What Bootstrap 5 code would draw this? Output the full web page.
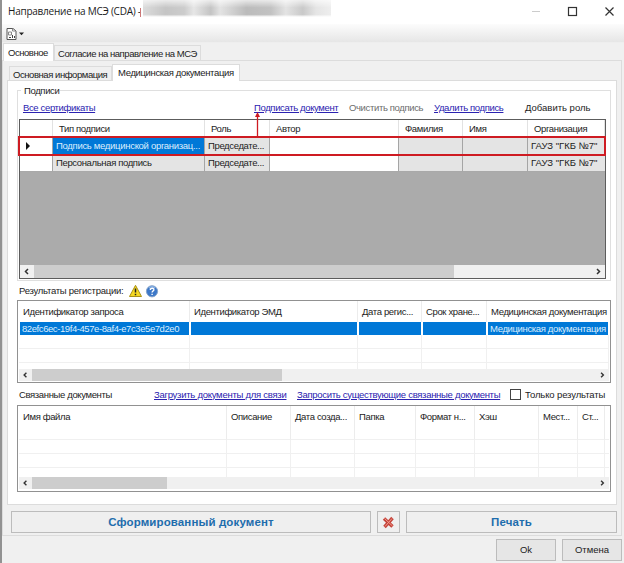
<!DOCTYPE html>
<html lang="ru">
<head>
<meta charset="utf-8">
<meta name="viewport" content="width=device-width, initial-scale=1">
<title>Направление на МСЭ (CDA)</title>
<link href="https://cdn.jsdelivr.net/npm/bootstrap@5.3.0/dist/css/bootstrap.min.css" rel="stylesheet">
<style>
body{font:9.5px/12px "Liberation Sans",sans-serif;letter-spacing:-.36px;color:#1c1c1c;background:#f0f0f0;overflow:hidden}
.win{width:624px;height:563px;border-left:2px solid #929292}
.titlebar{height:24px;background:#fff;padding-left:6px;font:10px/23px "Open Sans","Noto Sans",sans-serif;letter-spacing:-.24px}
.ttl{width:132px;white-space:nowrap}
.caret-red{width:1px;height:9px;background:#c77}
.redacted{width:188px;height:17px;margin-left:2px;background:linear-gradient(90deg,#dcdcdc,#c5c5c5 12%,#ccc 22%,#e6e6e6 27%,#c4c4c4 36%,#e3e3e3 41%,#bbb 55%,#c2c2c2 68%,#e3e3e3 76%,#c9c9c9 85%,#e5e5e5 92%,#eee);-webkit-mask-image:linear-gradient(#0005,#000 45%,#000 85%,#0000)}
.wctl{margin-left:auto}
.toolbar-strip{height:19px;background:linear-gradient(#fcfcfc,#e6e6e6);padding-left:3px;border-bottom:1px solid #eee}
.tabs-o{height:17px;padding-left:1px}
.tabs-i{height:16px;padding-left:2px}
.tb{border:1px solid #dcdcdc;border-bottom:0;background:#f0f0f0;white-space:nowrap}
.tb.on{background:#fff;position:relative;z-index:1;margin-bottom:-1px}
.tb-a{width:51px;height:18px;padding:3px 0 0 4px;letter-spacing:-.45px}
.tb-b{width:147px;height:15px;padding:2px 0 0 3px;letter-spacing:-.45px}
.tb-c{width:103px;height:14px;padding:2px 0 0 3px;letter-spacing:-.44px}
.tb-d{width:128px;height:17px;padding:2px 0 0 5px}
.pane-o{width:620px;height:476px;border:1px solid #dcdcdc;padding:3px 4px 0 4px;background:#f0f0f0}
.pane-i{width:610px;height:425px;border:1px solid #dcdcdc;background:#fff;padding:9px 0 0 9px}
.grp{width:594px;height:191px;border:1px solid #dfdfdf;padding:0 1px;margin:0}
.grp-t{margin:-6px 0 0 2px;padding:0 3px;background:#fff;width:39px}
.links{height:22px;padding-left:4px}
.lk{color:#2a22b0;text-decoration:underline;text-decoration-thickness:1px;text-underline-offset:1px;white-space:nowrap}
.k1{width:231px}.k2{width:95px}.k3{width:85px;color:#6d6d6d}.k4{width:91px}.k5{letter-spacing:0}
.grid1{width:587px;height:160px;border:1.5px solid #5c5c5c;background:#ababab;position:relative}
.r{display:grid}
.g1{grid-template-columns:33px 152px 65px 129px 64px 65px 1fr}
.g2{grid-template-columns:171px 168px 64px 65px 1fr}
.g3{grid-template-columns:208px 64px 64px 61px 59px 64px 39px 27px 1fr}
.r>span{white-space:nowrap;overflow:hidden}
.h1r{height:18px;background:#fff}
.h1r>span{padding:3px 0 0 6px;border-right:1px solid #e2e2e2}
.d1r{height:17px}
.d1r>span{background:#e4e4e4;border-right:1px solid #a5a5a5;border-bottom:1px solid #a9a9a9;padding:2px 0 0 3px}
.d1r>span:last-child{letter-spacing:0;border-right:0;padding-left:3px}
.d1r>.w{background:#fff}
.d1r>.sel,.selrow>span{background:#0078d7;color:#dceefd}
.d1r>.sel{letter-spacing:-.3px}
.frame-red{position:absolute;left:-2px;top:16px;width:588px;height:20px;border:2px solid #ce1b22}
.arrow-red{position:absolute;left:234px;top:-9px}
.sb{height:13px;background:#f0f0f0}
.sb1{position:absolute;left:0;right:0;bottom:0}
.sb svg{flex:none}
.th1{width:420px;height:13px;background:#cdcdcd}
.th2{width:250px;height:12px;background:#cdcdcd}
.th3{width:135px;height:12px;background:#cdcdcd}
.reg{height:18px;margin:1px 0 0 2px}.regt{width:110px;white-space:nowrap;letter-spacing:-.26px}
.list{width:594px;border:1px solid #919191;background:#fff;padding:0 1px}
.list2{height:83px}.list3{height:87px}.list .sb{height:12px}
.h2r{height:21px}.h2r>span{padding:5px 0 0 4px;border-right:1px solid #ececec}
.e>span{border-right:1px solid #f0f0f0;border-bottom:1px solid #f0f0f0}
.selrow{height:13px}.selrow>span{margin:0 1px;padding-left:2px;line-height:14px}
.selrow>.uid{letter-spacing:-.42px}
.e14{height:14px}.e5{height:6px}.e9{height:9px}.e5>span,.e9>span{border-bottom:0}
.h3r{height:34px}.h3r>span{padding:5px 0 0 4px;border-right:1px solid #ececec;border-bottom:1px solid #f0f0f0}
.rel{height:22px;margin-left:2px;padding-top:1px}.rel>*{flex:none;white-space:nowrap}
.q1{width:135px}.q2{width:143px;letter-spacing:-.26px}.q3{width:213px;letter-spacing:-.3px}.q4{margin-left:4px;letter-spacing:-.12px}
.cb{width:11px;height:11px;border:1px solid #444;background:#fff}
.wbtn{border:1.5px solid #bcbcbc;background:#efefef;height:22px;border-radius:0;padding:0;display:flex;align-items:center;justify-content:center;color:#222;font-size:9.5px;line-height:12px}
.big{color:#1e6dad;font-weight:700;font-size:11.5px;letter-spacing:.12px}
.acts{margin:6px 0 0 4px}.b1{width:360px}.b2{width:23px;margin:0 6px 0 6px}.b3{width:211px}
.foot{gap:6px;padding:3px 2px 0 0}.b4,.b5{width:60px}
.b5{background:#e6e6e6}.b4{background:#e6e6e6}
</style>
<script src="https://cdn.jsdelivr.net/npm/bootstrap@5.3.0/dist/js/bootstrap.bundle.min.js"></script>
</head>
<body>
<main class="win">
  <header class="titlebar d-flex">
    <span class="ttl">Направление на МСЭ (CDA) -</span><span class="caret-red mt-2"></span><span class="redacted"></span>
    <svg class="wctl" width="96" height="24" viewBox="0 0 96 24" fill="none" stroke="#333"><path d="M4 11.500h8" stroke="#ccc"/><rect x="40.500" y="7.500" width="8" height="8" stroke-width="1.200"/><path d="M77.500 7.500l8 8m0-8l-8 8" stroke-width="1.200"/></svg>
  </header>
  <div class="toolbar-strip d-flex">
    <svg width="22" height="18" viewBox="0 0 22 18"><path d="M2 4.500h6l3 2.500v8.500H2z" fill="#fff" stroke="#555"/><path d="M7.500 4.500V7h3M3.500 8h3v3h-3z" fill="none" stroke="#888"/><path d="M4 13.500h2M7.500 11v3M9.500 12v2" fill="none" stroke="#444"/><path d="M14 8.500h5l-2.500 2.700z" fill="#222"/></svg>
  </div>
  <div class="tabs-o d-flex align-items-end"><div class="tb tb-a on">Основное</div><div class="tb tb-b">Согласие на направление на МСЭ</div></div>
  <section class="pane-o">
    <div class="tabs-i d-flex align-items-end"><div class="tb tb-c">Основная информация</div><div class="tb tb-d on">Медицинская документация</div></div>
    <section class="pane-i">
      <section class="grp">
        <div class="grp-t">Подписи</div>
        <div class="links d-flex align-items-center">
          <a class="lk k1">Все сертификаты</a><a class="lk k2">Подписать документ</a><span class="k3 text-nowrap">Очистить подпись</span><a class="lk k4">Удалить подпись</a><span class="k5 text-nowrap">Добавить роль</span>
        </div>
        <div class="grid1">
          <div class="r g1 h1r"><span></span><span>Тип подписи</span><span>Роль</span><span>Автор</span><span>Фамилия</span><span>Имя</span><span>Организация</span></div>
          <div class="r g1 d1r"><span class="w"><svg class="d-block" width="12" height="11" viewBox="0 0 12 11"><path d="M3 2l4 4-4 4z" fill="#111"/></svg></span><span class="sel">Подпись медицинской организац...</span><span>Председате...</span><span class="w"></span><span></span><span></span><span>ГАУЗ "ГКБ №7"</span></div>
          <div class="r g1 d1r"><span class="w"></span><span>Персональная подпись</span><span>Председате...</span><span class="w"></span><span></span><span></span><span>ГАУЗ "ГКБ №7"</span></div>
          <div class="sb sb1 d-flex"><svg width="14" height="13" viewBox="0 0 14 13"><path d="M8 4L5.500 6.500 8 9" fill="none" stroke="#333" stroke-width="1.500"/></svg><span class="th1"></span><svg class="ms-auto" width="14" height="13" viewBox="0 0 14 13"><path d="M6 4l2.500 2.500L6 9" fill="none" stroke="#333" stroke-width="1.500"/></svg></div>
          <span class="frame-red"></span>
          <svg class="arrow-red" width="7" height="26" viewBox="0 0 7 26"><path d="M3.500 3v23" stroke="#ce1b22" stroke-width="1.300"/><path d="M3.500 1L6 6H1z" fill="#ce1b22"/></svg>
        </div>
      </section>
      <div class="reg d-flex align-items-center"><span class="regt">Результаты регистрации:</span>
        <svg width="32" height="16" viewBox="0 0 32 16"><path d="M6.500 2.300L12.500 13.500H.5z" fill="#f6d923" stroke="#a99119" stroke-linejoin="round"/><path d="M6.500 5.500v4M6.500 10.700v1.500" stroke="#222" stroke-width="1.500"/><circle cx="23" cy="8.300" r="5.600" fill="#3d78c8" stroke="#88a6cc"/><path d="M20 5.200a4 4 0 0 1 6 0" stroke="#a9caf2" fill="none"/><path d="M21.300 7c.1-2.600 4-2.100 3.500 0-.3 1.100-1.700 1.100-1.700 2.500M23.100 10.700v1.300" stroke="#fff" stroke-width="1.400" fill="none"/></svg>
      </div>
      <div class="list list2">
        <div class="r g2 h2r"><span>Идентификатор запроса</span><span>Идентификатор ЭМД</span><span>Дата регис...</span><span>Срок хране...</span><span class="border-end-0">Медицинская документация</span></div>
        <div class="r g2 selrow"><span class="uid">82efc6ec-19f4-457e-8af4-e7c3e5e7d2e0</span><span></span><span></span><span></span><span>Медицинская документация</span></div>
        <div class="r g2 e e14"><span></span><span></span><span></span><span></span><span></span></div>
        <div class="r g2 e e14"><span></span><span></span><span></span><span></span><span></span></div>
        <div class="r g2 e e5"><span></span><span></span><span></span><span></span><span></span></div>
        <div class="sb d-flex"><svg width="13" height="12" viewBox="0 0 14 13"><path d="M8 4L5.500 6.500 8 9" fill="none" stroke="#333" stroke-width="1.500"/></svg><span class="th2"></span><svg class="ms-auto" width="14" height="12" viewBox="0 0 14 13"><path d="M6 4l2.500 2.500L6 9" fill="none" stroke="#333" stroke-width="1.500"/></svg></div>
      </div>
      <div class="rel d-flex align-items-center"><span class="q1">Связанные документы</span><a class="lk q2">Загрузить документы для связи</a><a class="lk q3">Запросить существующие связанные документы</a><span class="cb"></span><span class="q4">Только результаты</span></div>
      <div class="list list3">
        <div class="r g3 h3r"><span>Имя файла</span><span>Описание</span><span>Дата созда...</span><span>Папка</span><span>Формат н...</span><span>Хэш</span><span>Мест...</span><span>Ст...</span><span class="p-0 border-end-0"></span></div>
        <div class="r g3 e e14"><span></span><span></span><span></span><span></span><span></span><span></span><span></span><span></span><span class="border-end-0"></span></div>
        <div class="r g3 e e14"><span></span><span></span><span></span><span></span><span></span><span></span><span></span><span></span><span class="border-end-0"></span></div>
        <div class="r g3 e e9"><span></span><span></span><span></span><span></span><span></span><span></span><span></span><span></span><span class="border-end-0"></span></div>
        <div class="sb d-flex"><svg width="13" height="12" viewBox="0 0 14 13"><path d="M8 4L5.500 6.500 8 9" fill="none" stroke="#333" stroke-width="1.500"/></svg><span class="th3"></span><svg class="ms-auto" width="14" height="12" viewBox="0 0 14 13"><path d="M6 4l2.500 2.500L6 9" fill="none" stroke="#333" stroke-width="1.500"/></svg></div>
      </div>
    </section>
    <div class="acts d-flex"><button class="btn wbtn big b1">Сформированный документ</button>
      <button class="btn wbtn b2"><svg width="13" height="13" viewBox="0 0 13 13"><path d="M2 2.500l8.500 8M10.500 2l-8 9" stroke="#c4433a" stroke-width="3.400"/><path d="M2.500 2.500l8 7.500M10 2.500l-7 8" stroke="#f19a8c" stroke-width="1"/></svg></button>
      <button class="btn wbtn big b3">Печать</button></div>
  </section>
  <footer class="d-flex justify-content-end foot"><button class="btn wbtn b4">Ok</button><button class="btn wbtn b5">Отмена</button></footer>
</main>
</body>
</html>
